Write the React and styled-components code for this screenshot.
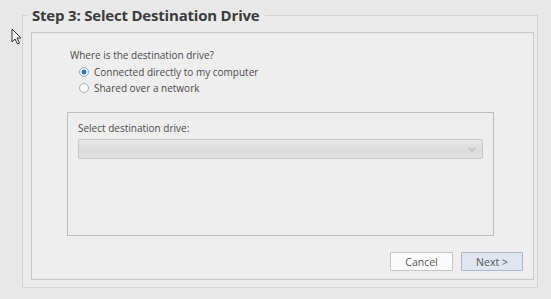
import styled, { createGlobalStyle } from "styled-components";

const GlobalStyle = createGlobalStyle`
  body {
    margin: 0;
    background: #e8e8e8;
    font-family: "Open Sans", "Noto Sans", sans-serif;
  }
`;

const Page = styled.div`
  position: relative;
  width: 551px;
  height: 299px;
  overflow: hidden;
  background: #e8e8e8;
  box-sizing: border-box;
  padding: 5px 13px 0 22px;
`;

const Frame = styled.fieldset`
  margin: 0;
  padding: 0 3px 7px 8px;
  height: 283px;
  box-sizing: border-box;
  border: 1px solid #d3d3d3;
  background: #ebebeb;
  display: flex;
  flex-direction: column;
`;

const Title = styled.legend`
  margin-left: -4px;
  padding: 0 5px 0 5px;
  font-size: 15px;
  font-weight: 700;
  line-height: 20px;
  color: #3b3b3b;
  letter-spacing: -0.2px;
`;

const Panel = styled.div`
  flex: 1;
  margin-top: 7px;
  border: 1px solid #c9c9c9;
  background: #efeeee;
  display: flex;
  flex-direction: column;
  padding: 15px 10px 8px 35px;
`;

const Question = styled.div`
  padding-left: 3px;
  margin-bottom: 2px;
  font-size: 10px;
  line-height: 14px;
  color: #4a4a4a;
`;

const RadioRow = styled.label`
  display: flex;
  align-items: center;
  gap: 5px;
  height: 16px;
  padding-left: 12px;
  font-size: 10px;
  color: #4a4a4a;
`;

const RadioDot = styled.span`
  width: 8px;
  height: 8px;
  border-radius: 50%;
  border: 1px solid ${(p) => (p.$checked ? "#8aa6c8" : "#a8a8a8")};
  background: ${(p) =>
    p.$checked
      ? "radial-gradient(circle, #3d74b8 0 2.2px, #f4f6fa 2.8px)"
      : "#fafafa"};
`;

const Group = styled.div`
  margin-top: 16px;
  width: 427px;
  height: 124px;
  box-sizing: border-box;
  border: 1px solid #bdbdbd;
  padding: 8px 10px 0 10px;
`;

const GroupLabel = styled.div`
  font-size: 10px;
  line-height: 14px;
  color: #4a4a4a;
`;

const Combo = styled.div`
  margin-top: 4px;
  height: 20px;
  box-sizing: border-box;
  border: 1px solid #c6c6c6;
  border-radius: 2px;
  background: linear-gradient(#e9e9e9, #dcdcdc 55%, #e2e2e2);
  display: flex;
  align-items: center;
  justify-content: flex-end;
  padding-right: 6px;
`;

const Buttons = styled.div`
  margin-top: auto;
  display: flex;
  justify-content: flex-end;
  gap: 8px;
`;

const Button = styled.button`
  width: ${(p) => (p.$primary ? "62px" : "63px")};
  height: 19px;
  padding: 0;
  font-family: inherit;
  font-size: 10.5px;
  color: #555;
  border: 1px solid ${(p) => (p.$primary ? "#a9b8cc" : "#c4c4c4")};
  background: ${(p) => (p.$primary ? "#dfe6f0" : "#fbfbfb")};
  border-radius: 1px;
`;

const Cursor = styled.svg`
  position: absolute;
  left: 11px;
  top: 28px;
`;

export default function App() {
  return (
    <>
      <GlobalStyle />
      <Page>
        <Frame>
          <Title>Step 3: Select Destination Drive</Title>
          <Panel>
            <Question>Where is the destination drive?</Question>
            <RadioRow>
              <RadioDot $checked />
              Connected directly to my computer
            </RadioRow>
            <RadioRow>
              <RadioDot />
              Shared over a network
            </RadioRow>
            <Group>
              <GroupLabel>Select destination drive:</GroupLabel>
              <Combo>
                <svg width="8" height="5" viewBox="0 0 8 5">
                  <path d="M1 1 L4 4 L7 1" fill="none" stroke="#b4b4b4" strokeWidth="1.2" />
                </svg>
              </Combo>
            </Group>
            <Buttons>
              <Button>Cancel</Button>
              <Button $primary>Next &gt;</Button>
            </Buttons>
          </Panel>
        </Frame>
        <Cursor width="11" height="17" viewBox="0 0 11 17">
          <path
            d="M1 1 L1 14 L4 11 L6.5 16 L8.5 15 L6 10 L10 10 Z"
            fill="#f4f4f4"
            stroke="#333"
            strokeWidth="1"
            strokeLinejoin="round"
          />
        </Cursor>
      </Page>
    </>
  );
}
